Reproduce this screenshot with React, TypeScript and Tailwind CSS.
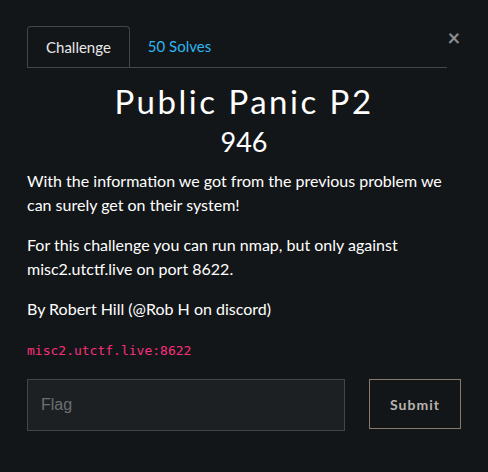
import React from "react";

const App: React.FC = () => {
  return (
    <div className="w-[488px] h-[472px] bg-[#131618] overflow-hidden" style={{ fontFamily: "Lato, 'Open Sans', sans-serif" }}>
      <div className="pl-[27px] pr-[27px] pt-[26px]">
        <div className="flex items-start">
          <ul className="flex flex-1 border-b border-[#41464b]">
            <li className="h-[41px] px-[18px] flex items-center border border-b-0 border-[#41464b] rounded-t-[4px] text-[15px] text-[#e8e8e8] -mb-px bg-[#131618]">
              Challenge
            </li>
            <li className="h-[41px] px-[18px] flex items-center text-[15px] text-[#2cb6f2]">
              50 Solves
            </li>
          </ul>
          <button className="w-[14px] mt-[2px] text-[#8a8d90] text-[22px] font-bold leading-[20px]">
            ×
          </button>
        </div>

        <h1 className="text-center text-[33px] font-normal text-white tracking-[2.5px] mt-[11px] leading-[44px]">
          Public Panic P2
        </h1>
        <h2 className="text-center text-[27px] text-white leading-[36px] mt-[1px]">946</h2>

        <div className="mt-[9px] text-[16px] leading-[24px] text-white">
          <p>With the information we got from the previous problem we can surely get on their system!</p>
          <p className="mt-[16px]">For this challenge you can run nmap, but only against misc2.utctf.live on port 8622.</p>
          <p className="mt-[16px]">By Robert Hill (@Rob H on discord)</p>
          <p className="mt-[16px]">
            <code className="text-[13px] text-[#fb2f7c]" style={{ fontFamily: "'DejaVu Sans Mono', monospace" }}>
              misc2.utctf.live:8622
            </code>
          </p>
        </div>

        <div className="flex items-start gap-[24px] mt-[16px]">
          <input
            placeholder="Flag"
            className="w-[318px] h-[52px] bg-[#1d2023] border border-[#41464b] px-[13px] text-[16px] text-white placeholder:text-[#6c6f72] outline-none"
            style={{ fontFamily: "'Liberation Sans', Arial, sans-serif" }}
          />
          <button className="w-[92px] h-[50px] border border-[#8a7a6a] text-[#b7b3ad] text-[14px] font-bold tracking-[1px]">
            Submit
          </button>
        </div>
      </div>
    </div>
  );
};

export default App;
